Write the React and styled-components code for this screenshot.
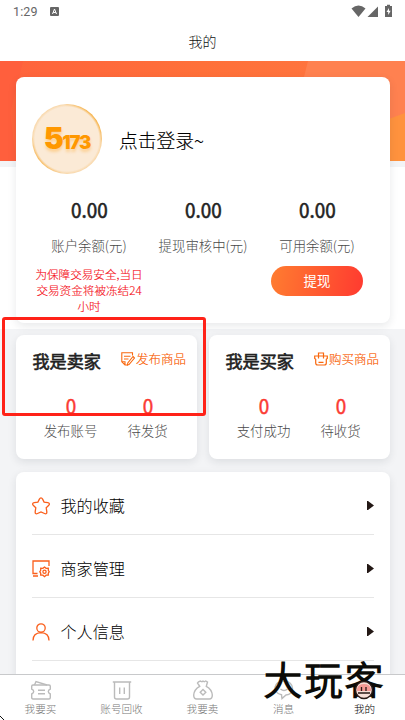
import React from 'react';
import styled, { createGlobalStyle } from 'styled-components';

const GlobalStyle = createGlobalStyle`
  * {
    box-sizing: border-box;
  }

  body {
    margin: 0;
    background: #fff;
    color: #111;
    font-family: 'Noto Sans CJK SC', 'Noto Sans', sans-serif;
    font-weight: 300;
  }
`;

const Screen = styled.div`
  position: relative;
  display: flex;
  flex-direction: column;
  width: 405px;
  height: 720px;
  overflow: hidden;
  background: #fff;
`;

const StatusBar = styled.div`
  display: flex;
  align-items: center;
  height: 22px;
  flex-shrink: 0;
  padding: 0 13px;
  color: #666;
  font-family: Roboto, sans-serif;
  font-size: 12.5px;
  font-weight: 400;
  letter-spacing: 0.1px;

  svg {
    display: block;
  }
`;

const StatusIcons = styled.div`
  display: flex;
  align-items: center;
  margin-left: auto;
`;

const Header = styled.header`
  display: flex;
  align-items: center;
  justify-content: center;
  height: 39px;
  flex-shrink: 0;
  padding-bottom: 2px;
  font-size: 14px;
`;

const Content = styled.main`
  flex: 1;
  min-height: 0;
  overflow: hidden;
  background: #f3f4f6;
`;

const Top = styled.section`
  display: grid;
  height: 268px;

  > * {
    grid-area: 1 / 1;
  }
`;

const Backdrop = styled.div`
  padding-top: 106px;
  background: #fff content-box;

  svg {
    display: block;
    margin-top: -106px;
  }
`;

const Card = styled.div`
  border-radius: 8px;
  background: #fff;
  box-shadow: 0 3px 8px rgba(30, 35, 45, 0.1);
`;

const AccountCard = styled(Card)`
  z-index: 1;
  height: 246px;
  margin: 16px 15px 0 16px;
  padding: 27px 16px 0;
`;

const Login = styled.div`
  display: flex;
  align-items: center;
  gap: 17px;
  height: 70px;
  color: #000;
  font-size: 18.8px;
  -webkit-text-stroke: 0.15px #000;
`;

const Avatar = styled.div`
  display: flex;
  align-items: baseline;
  justify-content: center;
  width: 70px;
  height: 70px;
  padding-top: 17px;
  border-radius: 50%;
  background: radial-gradient(circle, #fbead6 0 32px, transparent 34.5px),
    linear-gradient(50deg, #f59b0c 2%, #f9d9ad 25%, #f9d9ad 70%, #f59b0c 94%);
  color: #ff9800;
  font-family: Inter, sans-serif;
  font-weight: 900;
  text-shadow: 0 3px 3px rgba(255, 152, 0, 0.3);
  -webkit-text-stroke: 0;
`;

const LogoDigits = styled.span`
  font-size: ${props => props.$size}px;
  letter-spacing: ${props => props.$spacing}px;
  line-height: 34px;
`;

const Balances = styled.div`
  display: grid;
  grid-template-columns: repeat(3, 1fr);
  padding-top: 22px;
`;

const Balance = styled.div`
  display: flex;
  flex-direction: column;
  align-items: center;
`;

const Amount = styled.div`
  color: #222;
  font-size: 20.5px;
  font-weight: 400;
  line-height: 28px;
  transform: translate(0.5px, -1px) scaleX(0.92);
  -webkit-text-stroke: 0.6px #222;
`;

const Label = styled.div`
  color: #484848;
  font-size: 13.4px;
  line-height: 20px;
  white-space: nowrap;
`;

const BalanceLabel = styled(Label)`
  margin-top: 11px;
`;

const Warning = styled.div`
  width: 110px;
  margin-top: 11px;
  color: #f5101a;
  font-size: 11.6px;
  line-height: 16.2px;
  text-align: center;
  -webkit-text-stroke: 0.15px #f5101a;
`;

const Withdraw = styled.button`
  width: 92px;
  height: 30px;
  margin-top: 11px;
  padding: 0 0 2px;
  border: 0;
  border-radius: 15px;
  background: linear-gradient(100deg, #ff7d30, #ff3a30);
  color: #fff;
  font-family: inherit;
  font-size: 13.4px;
  font-weight: 400;
`;

const Roles = styled.section`
  display: grid;
  grid-template-columns: 1fr 1fr;
  gap: 12px;
  padding: 6px 15px 0 16px;
`;

const RoleCard = styled(Card)`
  height: 124px;
  padding: 12px 11px 0 16px;
`;

const RoleHead = styled.div`
  display: flex;
  align-items: center;
  justify-content: space-between;
  height: 28px;
`;

const RoleTitle = styled.h2`
  margin: 0 0 0 0.5px;
  color: #222;
  font-size: 17.1px;
  font-weight: 400;
  line-height: 28px;
  -webkit-text-stroke: 0.6px #222;
`;

const RoleLink = styled.a`
  display: flex;
  align-items: center;
  gap: 1px;
  padding-bottom: 5px;
  color: #f95a00;
  font-size: 12.5px;
  line-height: 20px;
  -webkit-text-stroke: 0.15px #f95a00;
`;

const Stats = styled.div`
  display: grid;
  grid-template-columns: 1fr 1fr;
  margin-top: 17px;
  text-align: center;
`;

const Count = styled.div`
  color: #fb3a33;
  font-size: 20.5px;
  font-weight: 400;
  line-height: 28px;
  transform: translate(0.5px, -1px) scaleX(0.92);
  -webkit-text-stroke: 0.5px #fb3a33;
`;

const Menu = styled(Card)`
  margin: 13px 15px 0 16px;
  padding: 0 16px;
`;

const MenuItem = styled.div`
  display: flex;
  align-items: center;
  height: 63px;
  padding-top: 5px;
  border-bottom: 1px solid #e6e6e6;
  color: #000;
  font-size: 16.1px;

  svg {
    display: block;
  }

  span {
    flex: 1;
    margin-left: 10.5px;
    padding-bottom: 2px;
  }
`;

const TabBar = styled.nav`
  display: grid;
  grid-template-columns: repeat(5, 1fr);
  height: 46px;
  flex-shrink: 0;
  border-top: 1px solid #c8c9cb;
  background: #fff;
`;

const Tab = styled.div`
  display: flex;
  flex-direction: column;
  align-items: center;
  padding-top: 5px;
  color: ${props => (props.$active ? '#000' : '#777')};
  font-size: 10.6px;
  line-height: 16px;

  svg {
    display: block;
    margin-bottom: 1px;
  }
`;

const Highlight = styled.div`
  position: absolute;
  top: 317px;
  left: 2px;
  z-index: 2;
  width: 204px;
  height: 99px;
  border: 3px solid #ff2218;
  border-radius: 3px;
`;

const Watermark = styled.div`
  position: absolute;
  top: 659px;
  left: 264px;
  z-index: 3;
  color: #0b0b08;
  font-size: 38px;
  font-weight: 300;
  line-height: 37px;
  letter-spacing: 2.5px;
  white-space: nowrap;
  text-shadow: 0 0 2px #e8e4cc;
  -webkit-text-stroke: 1.7px #0b0b08;
  stroke-linejoin: round;
`;

const Pointer = styled.svg`
  position: absolute;
  bottom: 0;
  left: 0;
`;

const MaskFace = styled.svg`
  position: absolute;
  top: 680px;
  left: 353px;
  z-index: 4;
`;

const BannerArt = () => (
  <svg width="405" height="100" viewBox="0 0 405 100">
    <defs>
      <linearGradient id="banner" x1="0" x2="1">
        <stop offset="0" stopColor="#ff633d" />
        <stop offset="0.5" stopColor="#ff7039" />
        <stop offset="1" stopColor="#ff7742" />
      </linearGradient>
    </defs>
    <rect width="405" height="100" fill="url(#banner)" />
    <path d="M0 0h23L10 52 16 100H0z" fill="#ff5f3d" />
    <path d="M308 0h97v100h-122z" fill="#ff8150" />
    <path d="M405 52l-35 13v35h35z" fill="#ff923e" />
  </svg>
);

const StatusGlyphs = () => (
  <svg width="41" height="14" viewBox="0 0 41 14" fill="#666">
    <path d="M0.500 4.500Q7.500-1.500 14.500 4.500L7.500 13z" />
    <path d="M27 2.500V13H16.500z" />
    <path d="M34 2h2V.7h3V2h2v11h-7z" />
    <path d="M38 4l-2.500 4h1.700v3l2.500-4.200H38z" fill="#fff" />
  </svg>
);

const PublishIcon = () => (
  <svg width="14" height="14" viewBox="0 0 14 14" fill="none" stroke="#f9680e" strokeWidth="1.1">
    <path d="M11.500 3.500V.8H.8v9L4 13h3M3 4.300h6.500M3 7h4.500M.8 9.800H4V13" />
    <path d="M12 4.500l1.500 1.500-5.500 6.500-1.500.5.300-2z" />
  </svg>
);

const BagIcon = () => (
  <svg width="14" height="14" viewBox="0 0 14 14" fill="none" stroke="#f9680e" strokeWidth="1.2">
    <path d="M.7 4h12.600v2.500l-1 .8V11q0 2-2 2H3.700q-2 0-2-2V7.300l-1-.8zM4.500 6.500V1h5v5.500M4.500 10.300h5" />
  </svg>
);

const menuIcons = {
  star: (
    <path d="M9 .8c.8 0 1.200.5 1.600 1.300l1.500 3 3.700.6c1.700.3 2 1.300 1 2.500l-2.600 2.600.6 3.900c.2 1.900-.7 2.600-2.300 1.800L9 14.900l-3.500 1.600c-1.600.8-2.500.1-2.300-1.800l.6-3.900L1.200 8.200c-1-1.200-.7-2.200 1-2.500l3.700-.6 1.500-3C7.800 1.300 8.200.8 9 .8z" />
  ),
  manage: (
    <>
      <path d="M17 6V1H1v12.500h4.500M1 16h5" />
      <path d="M12.500 7l1.600 1.300 2.200-.1v2.200l.9 1.300-.9 1.400v2l-2.200.1-1.600 1.500-1.600-1.500-2.200-.1v-2l-.9-1.400.9-1.300V8.200l2.200.1z" />
      <circle cx="12.500" cy="11.800" r="1.600" />
    </>
  ),
  user: (
    <>
      <circle cx="9" cy="5" r="4.200" />
      <path d="M1 17.500q0-7.500 8-7.800 8 .3 8 7.800" />
    </>
  ),
};

const tabIcons = {
  ticket: (
    <>
      <path d="M2 5h16q1.300 0 1.300 1.300V9q-2 1-2 2.500t2 2.500v3.500q0 1.500-1.300 1.500H2Q.7 19 .7 17.500V14q2-1 2-2.500T.7 9V6.300Q.7 5 2 5zM7 10.200h7M7 13.700h7" />
      <path d="M3.500 5L5 1.500 16 5" />
    </>
  ),
  trash: <path d="M.8 2h18.400M2.500 2v15q0 2 2 2h11q2 0 2-2V2M7.700 7.500v6.500M12.300 7.500v6.500" />,
  pouch: (
    <>
      <path d="M5.500 1.800L7.300 1 9 1.800l1-.8 1.200.8 1.500-.8 1.800 1-1.200 4.300q5.600 3 6 8.700 0 4-3 4H3.700q-3 0-3-4 .4-5.700 6-8.700L4.500 3z" />
      <path d="M10 9.500l2.800 2.800-2.800 2.800-2.800-2.800z" />
    </>
  ),
  message: (
    <>
      <path d="M10 1c11 0 11 14 2 14l-4 3.500-.5-3.800C-2 13-1 1 10 1z" />
      <path d="M6.500 9q3.500 3 7 0" />
    </>
  ),
};

const menu = [
  { icon: 'star', text: '我的收藏' },
  { icon: 'manage', text: '商家管理' },
  { icon: 'user', text: '个人信息' },
];

const tabs = [
  { icon: 'ticket', text: '我要买' },
  { icon: 'trash', text: '账号回收' },
  { icon: 'pouch', text: '我要卖' },
  { icon: 'message', text: '消息' },
  { icon: null, text: '我的', active: true },
];

const roles = [
  {
    title: '我是卖家',
    link: '发布商品',
    Icon: PublishIcon,
    stats: ['发布账号', '待发货'],
  },
  {
    title: '我是买家',
    link: '购买商品',
    Icon: BagIcon,
    stats: ['支付成功', '待收货'],
  },
];

const App = () => (
  <>
    <GlobalStyle />
    <Screen>
      <StatusBar>
        1:29
        <svg width="9" height="9" viewBox="0 0 9 9" style={{ marginLeft: 12 }}>
          <rect width="9" height="9" rx="1" fill="#666" />
          <path d="M2.500 7L4.500 2l2 5M3.200 5.500h2.600" fill="none" stroke="#fff" />
        </svg>
        <StatusIcons>
          <StatusGlyphs />
        </StatusIcons>
      </StatusBar>
      <Header>我的</Header>

      <Content>
        <Top>
          <Backdrop>
            <BannerArt />
          </Backdrop>
          <AccountCard>
            <Login>
              <Avatar>
                <LogoDigits $size={30} $spacing={-1.5}>5</LogoDigits>
                <LogoDigits $size={18.5} $spacing={-1.2}>173</LogoDigits>
              </Avatar>
              点击登录~
            </Login>
            <Balances>
              <Balance>
                <Amount>0.00</Amount>
                <BalanceLabel>账户余额(元)</BalanceLabel>
                <Warning>为保障交易安全,当日交易资金将被冻结24小时</Warning>
              </Balance>
              <Balance>
                <Amount>0.00</Amount>
                <BalanceLabel>提现审核中(元)</BalanceLabel>
              </Balance>
              <Balance>
                <Amount>0.00</Amount>
                <BalanceLabel>可用余额(元)</BalanceLabel>
                <Withdraw>提现</Withdraw>
              </Balance>
            </Balances>
          </AccountCard>
        </Top>

        <Roles>
          {roles.map(({ title, link, Icon, stats }) => (
            <RoleCard key={title}>
              <RoleHead>
                <RoleTitle>{title}</RoleTitle>
                <RoleLink>
                  <Icon />
                  {link}
                </RoleLink>
              </RoleHead>
              <Stats>
                {stats.map(stat => (
                  <div key={stat}>
                    <Count>0</Count>
                    <Label>{stat}</Label>
                  </div>
                ))}
              </Stats>
            </RoleCard>
          ))}
        </Roles>

        <Menu>
          {menu.map(item => (
            <MenuItem key={item.text}>
              <svg width="18" height="18" viewBox="0 0 18 18" fill="none" stroke="#fa5f1c" strokeWidth="1.3">
                {menuIcons[item.icon]}
              </svg>
              <span>{item.text}</span>
              <svg width="7" height="9" viewBox="0 0 7 9">
                <path d="M0 0h1l6 4.500L1 9H0z" fill="#231815" />
              </svg>
            </MenuItem>
          ))}
          <MenuItem />
        </Menu>
      </Content>

      <TabBar>
        {tabs.map(tab => (
          <Tab key={tab.text} $active={tab.active}>
            <svg width="20" height="20" viewBox="0 0 20 20" fill="none" stroke="#bbb" strokeWidth="1.4">
              {tabIcons[tab.icon]}
            </svg>
            {tab.text}
          </Tab>
        ))}
      </TabBar>

      <Highlight />
      <Watermark>大玩客</Watermark>
      <MaskFace width="22" height="20" viewBox="0 0 22 20">
        <circle cx="11" cy="10" r="8.500" fill="#f7ded6" stroke="#2a1a16" strokeWidth="1.4" />
        <path d="M4 9q1-5 7-5t7 5v2H4z" fill="#f59a94" />
        <path d="M8.500 7v4M13 7v4M5 13h12" stroke="#2a1a16" strokeWidth="1.3" />
      </MaskFace>
      <Pointer width="5" height="5" viewBox="0 0 5 5">
        <path d="M0 1l4 4" stroke="#111" fill="none" />
      </Pointer>
    </Screen>
  </>
);

export default App;
